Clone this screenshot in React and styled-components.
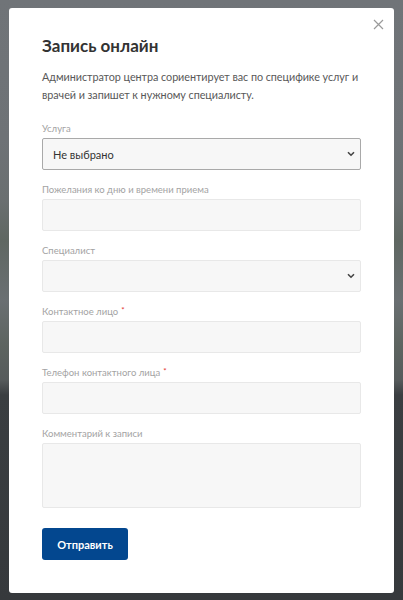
import React from "react";
import styled, { createGlobalStyle } from "styled-components";

const FONT = `Lato, "Open Sans", "Noto Sans", sans-serif`;

const Global = createGlobalStyle`
  html, body { margin: 0; padding: 0; }
  body {
    width: 403px;
    height: 600px;
    overflow: hidden;
    font-family: ${FONT};
    background: linear-gradient(
      180deg,
      #707478 0px,
      #6e7276 140px,
      #6a6f70 200px,
      #5f6762 240px,
      #6a6f72 300px,
      #5d6460 345px,
      #565b5c 380px,
      #3a3e41 395px,
      #36393c 600px
    );
  }
  * { box-sizing: border-box; }
`;

const Overlay = styled.div`
  padding: 8px 9px 7px 9px;
`;

const Modal = styled.div`
  position: relative;
  width: 385px;
  height: 585px;
  background: #ffffff;
  border-radius: 3px;
  padding: 28px 33px 0 33px;
  display: flex;
  flex-direction: column;
`;

const Close = styled.button`
  position: absolute;
  top: 9px;
  right: 9px;
  width: 14px;
  height: 14px;
  padding: 0;
  border: none;
  background: transparent;
  display: flex;
  align-items: center;
  justify-content: center;
  cursor: pointer;
`;

const Title = styled.h2`
  margin: 0;
  font-size: 17px;
  line-height: 20px;
  font-weight: 700;
  color: #333333;
`;

const Lead = styled.p`
  margin: 12px 0 18px 0;
  font-size: 10.8px;
  letter-spacing: -0.05px;
  line-height: 18px;
  color: #585858;
`;

const Form = styled.form`
  display: flex;
  flex-direction: column;
  gap: 13px;
`;

const Group = styled.div`
  display: flex;
  flex-direction: column;
  gap: 2px;
`;

const Label = styled.label`
  font-size: 9.5px;
  line-height: 14px;
  height: 14px;
  color: #a3a3a3;
`;

const Star = styled.span`
  color: #e3342f;
  font-size: 8px;
  line-height: 0;
  margin-left: 3px;
  position: relative;
  top: -2px;
`;

const fieldBase = `
  width: 100%;
  font-family: ${FONT};
  font-size: 11px;
  color: #333333;
  background: #f7f7f7;
  border-radius: 2px;
  outline: none;
`;

const Input = styled.input`
  ${fieldBase}
  height: 32px;
  border: 1px solid #e8e8e8;
  padding: 0 10px;
`;

const TextArea = styled.textarea`
  ${fieldBase}
  height: 65px;
  border: 1px solid #e8e8e8;
  padding: 8px 10px;
  resize: none;
  display: block;
`;

const SelectWrap = styled.div`
  position: relative;
`;

const Select = styled.select`
  ${fieldBase}
  appearance: none;
  -webkit-appearance: none;
  height: 32px;
  border: 1px solid ${(p) => (p.$active ? "#a9a9a9" : "#e8e8e8")};
  padding: 0 24px 0 10px;
`;

const Chevron = styled.svg`
  position: absolute;
  right: 6px;
  top: 13px;
  pointer-events: none;
`;

const Submit = styled.button`
  margin-top: 20px;
  align-self: flex-start;
  width: 86px;
  height: 32px;
  border: none;
  border-radius: 3px;
  background: #03478f;
  color: #ffffff;
  font-family: ${FONT};
  font-size: 11px;
  font-weight: 700;
  cursor: pointer;
`;

const ChevronIcon = () => (
  <Chevron width="8" height="6" viewBox="0 0 8 6">
    <path d="M1 1.2 L4 4.2 L7 1.2" fill="none" stroke="#444" strokeWidth="1.6" />
  </Chevron>
);

export default function App() {
  return (
    <>
      <Global />
      <Overlay>
        <Modal>
          <Close aria-label="Закрыть">
            <svg width="11" height="11" viewBox="0 0 11 11">
              <path d="M1 1 L10 10 M10 1 L1 10" stroke="#9a9a9a" strokeWidth="1.2" fill="none" />
            </svg>
          </Close>
          <Title>Запись онлайн</Title>
          <Lead>
            Администратор центра сориентирует вас по специфике услуг и врачей и запишет к нужному специалисту.
          </Lead>
          <Form onSubmit={(e) => e.preventDefault()}>
            <Group>
              <Label>Услуга</Label>
              <SelectWrap>
                <Select $active defaultValue="none">
                  <option value="none">Не выбрано</option>
                </Select>
                <ChevronIcon />
              </SelectWrap>
            </Group>
            <Group>
              <Label>Пожелания ко дню и времени приема</Label>
              <Input type="text" />
            </Group>
            <Group>
              <Label>Специалист</Label>
              <SelectWrap>
                <Select defaultValue="">
                  <option value=""></option>
                </Select>
                <ChevronIcon />
              </SelectWrap>
            </Group>
            <Group>
              <Label>
                Контактное лицо<Star>*</Star>
              </Label>
              <Input type="text" />
            </Group>
            <Group>
              <Label>
                Телефон контактного лица<Star>*</Star>
              </Label>
              <Input type="tel" />
            </Group>
            <Group>
              <Label>Комментарий к записи</Label>
              <TextArea />
            </Group>
          </Form>
          <Submit type="button">Отправить</Submit>
        </Modal>
      </Overlay>
    </>
  );
}
